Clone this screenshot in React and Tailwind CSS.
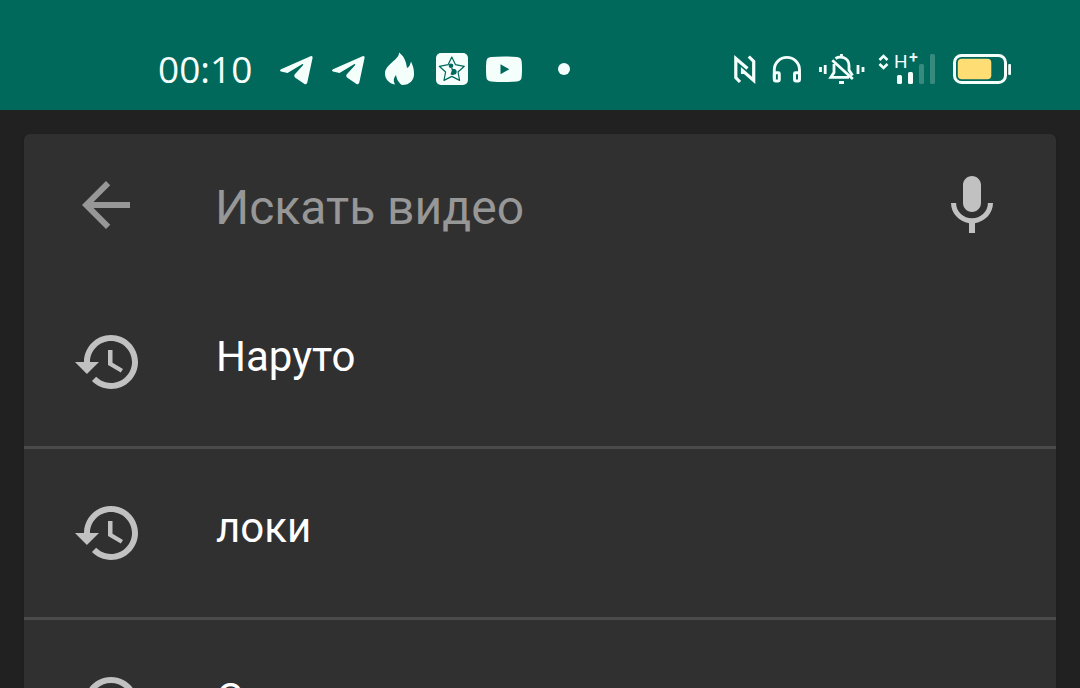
import React, { useState } from 'react';

const HISTORY = ['Наруто', 'локи', 'С'];

function TelegramIcon() {
    return (
        <svg className="w-9 h-9" viewBox="0 0 36 36" fill="currentColor" aria-hidden="true">
            <path d="M32.5 5.2 3 18.2Q1 19.6 3 20.6L9.5 22 24 13.2Q26 12.6 25 14.2L16.6 23.4Q15.6 25 17 26.4L26.5 32.9Q28.6 33.8 29.3 31.4L34.6 6.8Q34.8 4.4 32.5 5.2Z" />
        </svg>
    );
}

function FlameIcon() {
    return (
        <svg className="w-9 h-9" viewBox="0 0 36 36" fill="currentColor" aria-hidden="true">
            <path d="M17 1.5C17.5 9 3 13 3 22.5C3 28 7 32.500 13 33.5C11 30 11.5 27 14 24C15 30 18 32.5 20 34C28 34 32 29 32 23C32 18 31 15 29 10.5C28 14 27.5 16 25 17C24 10 22 5 17 1.5Z" />
        </svg>
    );
}

function StarIcon() {
    return (
        <svg className="w-9 h-9" viewBox="0 0 36 36" aria-hidden="true">
            <rect x="2" y="2" width="32" height="32" rx="5" fill="currentColor" />
            <g className="fill-[#00695c]">
                <path
                    d="M17.8 6 21.4 13.6 30.3 15.3 24 21 25.6 29.4 17.8 25.4 10 29.4 11.6 21 5.3 15.3 14.2 13.6Z"
                    fill="none"
                    stroke="#00695c"
                    strokeWidth="1.2"
                    strokeLinejoin="round"
                />
                <circle cx="17" cy="14.8" r="2.3" />
                <path d="M17 16.5 19.5 18C22 17.5 23.5 20 22.3 22.5C20.5 24.5 17.5 24 16.5 23.2L17.8 19.5Z" />
            </g>
        </svg>
    );
}

function YoutubeIcon() {
    return (
        <svg className="w-9 h-9" viewBox="0 0 36 36" aria-hidden="true">
            <path d="M5 6Q18 5 31 6Q35.5 6.2 35.7 11Q36.3 18 35.7 25.5Q35.5 30 31 30.5Q18 31.5 5 30.5Q.5 30 .3 25.5Q-.3 18 .3 11Q.5 6.2 5 6Z" fill="currentColor" />
            <path d="M14.5 13.3 23.3 18.3 14.5 23.3Z" fill="#00695c" />
        </svg>
    );
}

function NfcIcon() {
    return (
        <svg className="w-[22px] h-9" viewBox="0 0 22 36" fill="none" stroke="currentColor" strokeWidth="3.2" aria-hidden="true">
            <path d="M6 31 1.8 26.5V7.5L13.5 17.5" />
            <path d="M14.8 5.5 19.7 10.5V29.5L8.500 19.5V23" />
        </svg>
    );
}

function HeadphonesIcon() {
    return (
        <svg className="w-[30px] h-9" viewBox="0 0 30 36" fill="none" stroke="currentColor" strokeWidth="2.900" aria-hidden="true">
            <path d="M2.3 28V19a12.6 12.6 0 0 1 25.2 0v9" />
            <rect x="2.3" y="21.8" width="5" height="8.2" rx="1" />
            <rect x="22.5" y="21.8" width="5" height="8.2" rx="1" />
        </svg>
    );
}

function SilentIcon() {
    return (
        <svg className="w-11 h-9 overflow-visible" viewBox="0 0 44 36" fill="none" stroke="currentColor" strokeWidth="2.8" aria-hidden="true">
            <path d="M2.5 16v5M7.2 14v9M40 14v9M45 16v5" />
            <path d="M23.5 3v3M17.5 7.5C22 4.5 31 6 31 14.5V19L34.5 24.5" />
            <path d="M16 13V21.5L12.8 26.4H31" />
            <path d="M14.3 9.3 34.8 28" />
            <path d="M21 31.5h5" strokeWidth="3" />
        </svg>
    );
}

function SignalIcon() {
    return (
        <svg className="w-[58px] h-9 overflow-visible" viewBox="0 0 58 36" fill="currentColor" aria-hidden="true">
            <path d="M1.5 9 5.5 5 9.5 9M1.5 13 5.5 17 9.5 13" fill="none" stroke="currentColor" strokeWidth="2.6" />
            <text x="16" y="17" fontSize="19" fontFamily="Roboto, sans-serif">H</text>
            <text x="31" y="12" fontSize="16" fontWeight="500" fontFamily="Roboto, sans-serif">+</text>
            <rect x="19" y="24" width="5" height="9" rx="1.5" />
            <rect x="30" y="21" width="5" height="12" rx="1.5" />
            <rect x="41" y="13" width="5" height="20" rx="1.5" opacity=".22" />
            <rect x="52" y="3" width="5" height="30" rx="1.5" opacity=".22" />
        </svg>
    );
}

function BatteryIcon() {
    return (
        <svg className="w-[60px] h-9" viewBox="0 0 60 36" aria-hidden="true">
            <rect x="2.5" y="4.5" width="51" height="27" rx="7" fill="none" stroke="currentColor" strokeWidth="3" />
            <rect x="5.8" y="7.8" width="33.5" height="20.4" rx="4" fill="#fedd74" />
            <rect x="56.2" y="13" width="2.8" height="11" rx="1" fill="currentColor" />
        </svg>
    );
}

function HistoryIcon() {
    return (
        <svg className="w-18 h-18 shrink-0" viewBox="0 0 24 24" fill="currentColor" aria-hidden="true">
            <path d="M13 3c-4.97 0-9 4.03-9 9H1l3.89 3.89.07.14L9 12H6c0-3.87 3.13-7 7-7s7 3.13 7 7-3.13 7-7 7c-1.93 0-3.68-.79-4.94-2.06l-1.42 1.42C8.27 19.99 10.51 21 13 21c4.97 0 9-4.03 9-9s-4.03-9-9-9zm-1 5v5l4.28 2.54.72-1.21-3.5-2.08V8H12z" />
        </svg>
    );
}

function StatusBar() {
    return (
        <header className="flex items-center justify-between h-[110px] pt-7 pl-[158px] pr-[68px] bg-[#00695c] text-[#f4fffc]">
            <div className="flex items-center gap-4">
                <time className="mr-2.5 font-['Open_Sans',sans-serif] text-[37px] leading-9">00:10</time>
                <TelegramIcon />
                <TelegramIcon />
                <FlameIcon />
                <StarIcon />
                <YoutubeIcon />
                <span className="w-3 h-3 ml-5 rounded-full bg-current" />
            </div>
            <div className="flex items-center gap-4">
                <NfcIcon />
                <HeadphonesIcon />
                <SilentIcon />
                <SignalIcon />
                <BatteryIcon />
            </div>
        </header>
    );
}

function SearchBar({ query, setQuery }) {
    return (
        <form
            className="flex items-center h-[142px] mb-0.5 pl-[46px] pr-12"
            onSubmit={(e) => e.preventDefault()}
        >
            <button type="button" aria-label="Назад" className="shrink-0 text-[#979797]">
                <svg className="w-18 h-18" viewBox="0 0 24 24" fill="currentColor" aria-hidden="true">
                    <path d="M20 11H7.83l5.59-5.59L12 4l-8 8 8 8 1.41-1.41L7.83 13H20v-2z" />
                </svg>
            </button>
            <input
                type="text"
                aria-label="Искать видео"
                placeholder="Искать видео"
                value={query}
                onChange={(e) => setQuery(e.target.value)}
                className="flex-1 min-w-0 ml-[73px] pt-1.5 bg-transparent text-5xl leading-14 text-white placeholder:text-[#979797] outline-none"
            />
            <button type="button" aria-label="Голосовой поиск" className="shrink-0 pb-1 text-[#c1c1c1]">
                <svg className="w-18 h-18" viewBox="0 0 24 24" fill="currentColor" aria-hidden="true">
                    <path d="M12 15c1.66 0 3-1.34 3-3V6c0-1.66-1.34-3-3-3S9 4.34 9 6v6c0 1.66 1.34 3 3 3zm5.3-3c0 3-2.54 5.1-5.3 5.1S6.7 15 6.7 12H5c0 3.42 2.72 6.23 6 6.72V22h2v-3.28c3.28-.48 6-3.3 6-6.72h-1.7z" />
                </svg>
            </button>
        </form>
    );
}

function App() {
    const [query, setQuery] = useState('');

    return (
        <div className="flex flex-col h-screen overflow-hidden bg-[#212121] font-[Roboto,sans-serif]">
            <StatusBar />
            <main className="flex-1 min-h-0 mx-6 mt-6 overflow-hidden rounded-t-md bg-[#303030] shadow-md">
                <SearchBar query={query} setQuery={setQuery} />
                <ul>
                    {HISTORY.map((item) => (
                        <li key={item} className="border-b-3 border-[#4a4a4a]">
                            <button
                                type="button"
                                onClick={() => setQuery(item)}
                                className="flex items-center w-full h-[168px] pl-12 text-left text-[#c1c1c1]"
                            >
                                <HistoryIcon />
                                <span className="ml-18 pb-2.5 text-[42px] leading-12 text-white">{item}</span>
                            </button>
                        </li>
                    ))}
                </ul>
            </main>
        </div>
    );
}

export default App;
